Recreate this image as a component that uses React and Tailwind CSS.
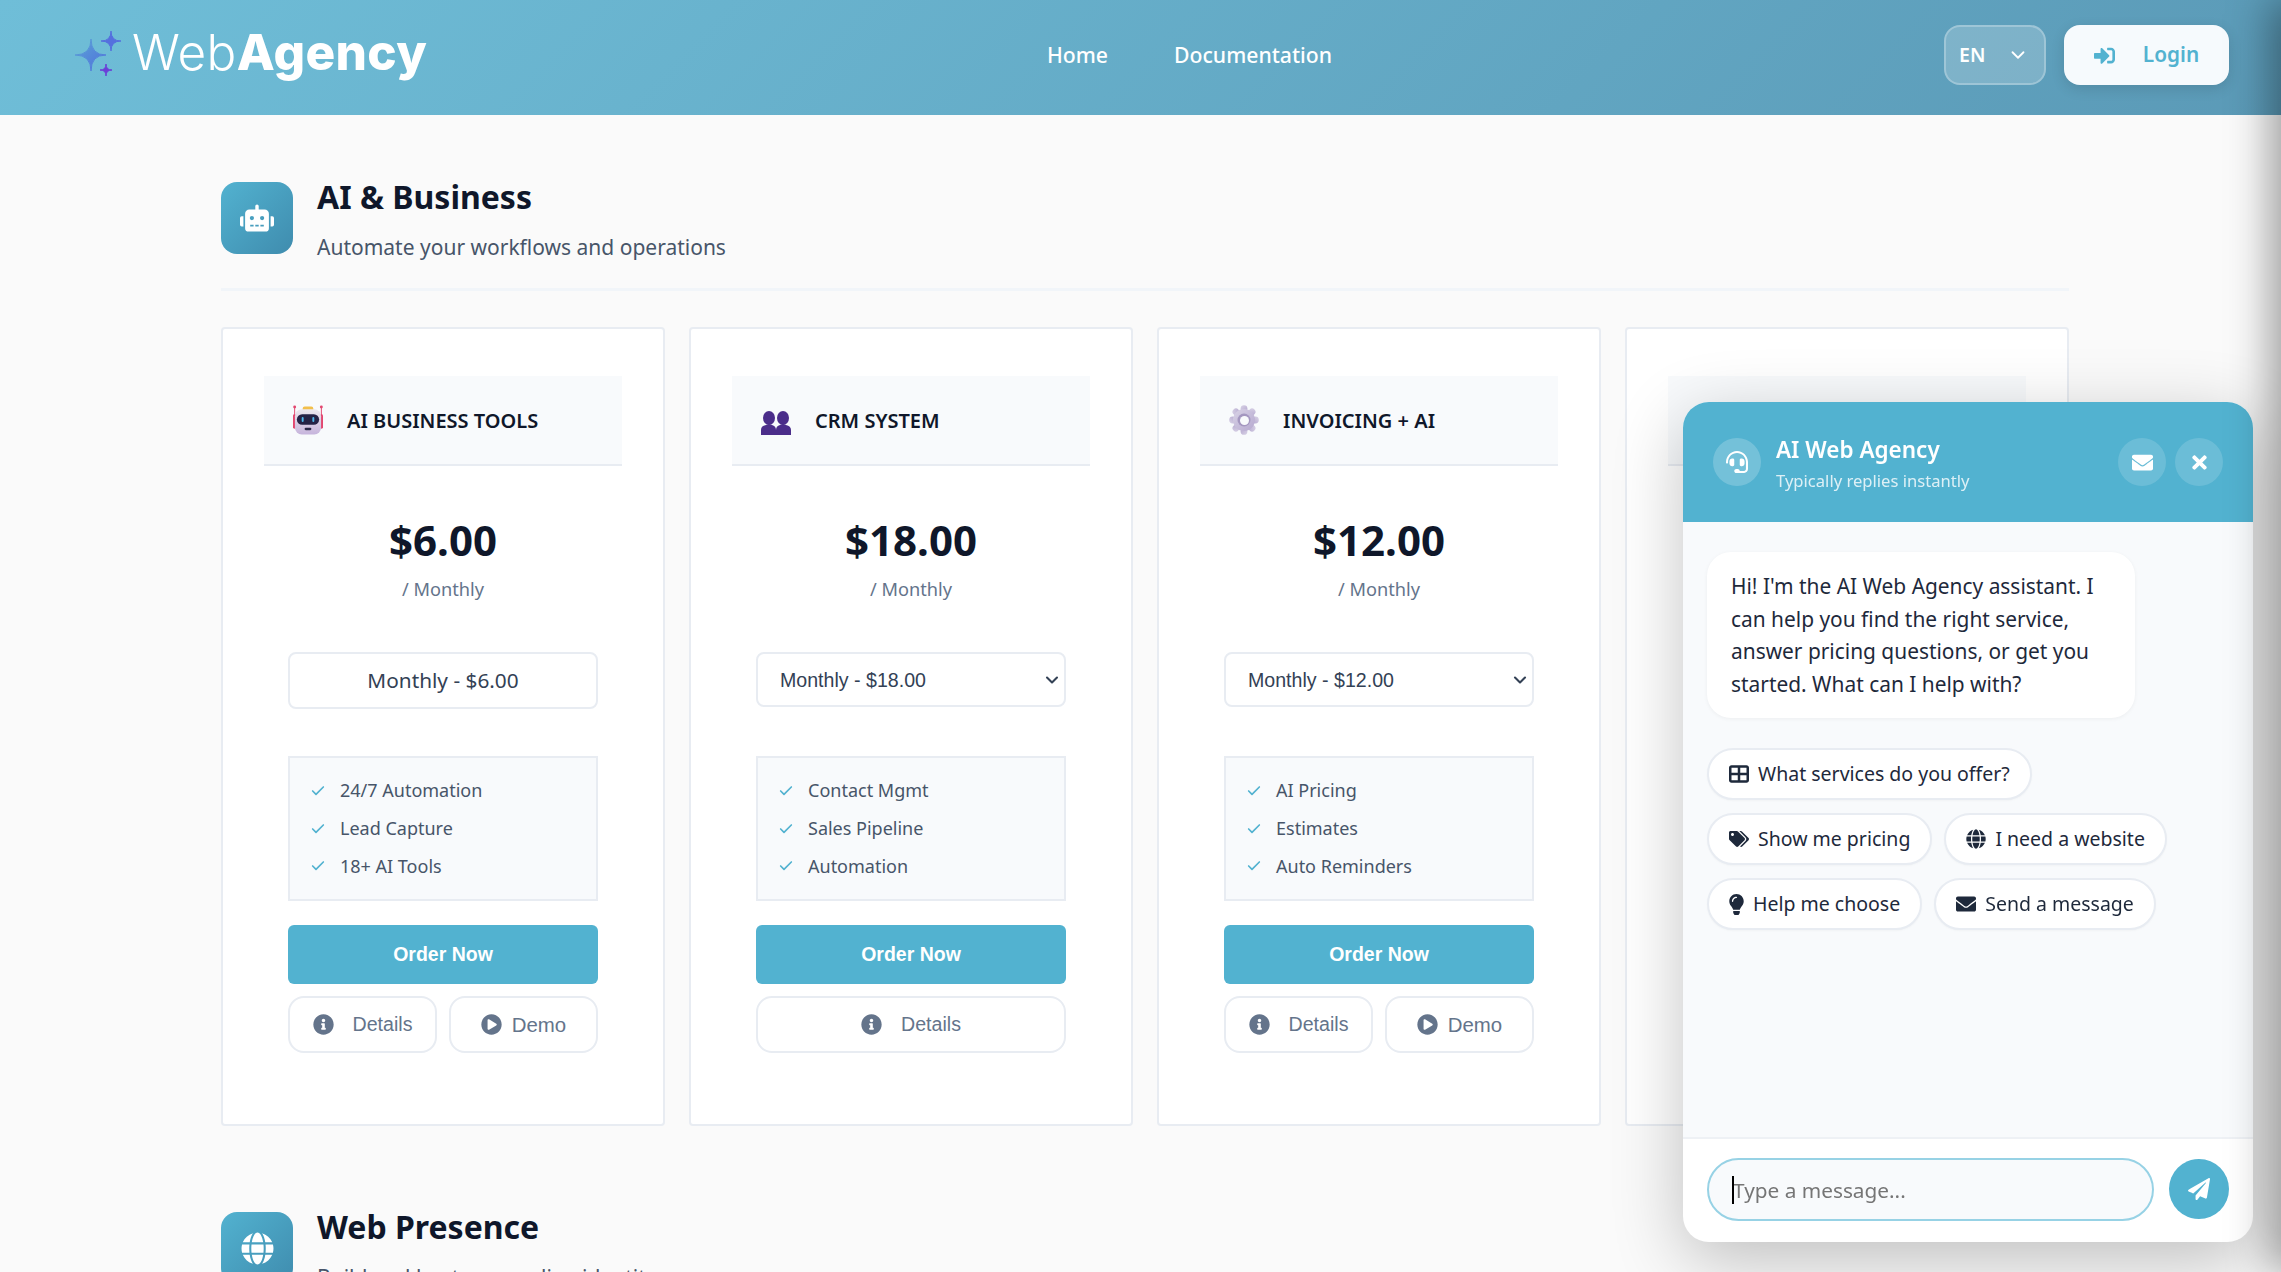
import { Check, ChevronDown } from "lucide-react";
import {
  FaRobot, FaGlobe, FaHeadset, FaEnvelope, FaTimes, FaPaperPlane, FaTags,
  FaLightbulb, FaInfoCircle, FaPlayCircle, FaSignInAlt,
} from "react-icons/fa";
import { FaTableCellsLarge } from "react-icons/fa6";

function Stars() {
  return (
    <svg width="46" height="46" viewBox="0 0 46 46" className="shrink-0 mt-[-3px]">
      <defs>
        <linearGradient id="star" x1="0" y1="0" x2="1" y2="1">
          <stop offset="0" stopColor="#5ba4d6" />
          <stop offset="1" stopColor="#4f6fdc" />
        </linearGradient>
      </defs>
      <path d="M16 8Q16 24 31 24Q16 24 16 40Q16 24 0 24Q16 24 16 8Z" fill="url(#star)" stroke="url(#star)" strokeWidth="1" />
      <path d="M36 0Q36 10 46 10Q36 10 36 20Q36 10 26 10Q36 10 36 0Z" fill="#5570de" stroke="#5570de" strokeWidth="1" />
      <path d="M31 33Q31 39 37 39Q31 39 31 45Q31 39 25 39Q31 39 31 33Z" fill="#6a3fd8" stroke="#6a3fd8" strokeWidth="1" />
    </svg>
  );
}

function RobotEmoji() {
  return (
    <svg width="31" height="30" viewBox="0 0 31 30">
      <defs>
        <linearGradient id="head" x1="0" y1="0" x2="0" y2="1">
          <stop offset="0" stopColor="#ece8ee" />
          <stop offset="1" stopColor="#c6b4dc" />
        </linearGradient>
      </defs>
      <rect x="0" y="9" width="3" height="15" rx="1.5" fill="#e2476f" />
      <rect x="28" y="9" width="3" height="15" rx="1.5" fill="#e2476f" />
      <rect x="1.2" y="1" width="1" height="9" fill="#e2476f" />
      <rect x="28.8" y="1" width="1" height="9" fill="#e2476f" />
      <circle cx="1.7" cy="1.5" r="1.5" fill="#e2476f" />
      <circle cx="29.3" cy="1.5" r="1.5" fill="#e2476f" />
      <rect x="10" y="1" width="11" height="5" rx="2" fill="#f2bf4b" />
      <rect x="2" y="4" width="27" height="26" rx="7" fill="url(#head)" />
      <rect x="4" y="9" width="23" height="11" rx="5.5" fill="#252245" />
      <rect x="9" y="12" width="2" height="5" rx="1" fill="#4fb7ea" />
      <rect x="20" y="12" width="2" height="5" rx="1" fill="#4fb7ea" />
      <rect x="12" y="23" width="7" height="2.5" rx="1.2" fill="#2d2a4a" />
    </svg>
  );
}

function PeopleEmoji() {
  return (
    <svg width="30" height="24" viewBox="0 0 30 24" className="mt-[6px]">
      <g fill="#4b2d8a">
        <ellipse cx="8" cy="7" rx="6" ry="7" />
        <ellipse cx="22" cy="7" rx="6" ry="7" />
        <path d="M0 24v-5q0-4 5-5l3-1 3 1q4 1 4 5v5z" />
        <path d="M15 24v-5q0-4 4-5l3-1 3 1q5 1 5 5v5z" />
      </g>
    </svg>
  );
}

function GearEmoji() {
  const angles = [0, 45, 90, 135, 180, 225, 270, 315];
  return (
    <svg width="30" height="30" viewBox="0 0 30 30">
      <defs>
        <linearGradient id="gear" x1="0" y1="0" x2="1" y2="1">
          <stop offset="0" stopColor="#d9d3e6" />
          <stop offset="1" stopColor="#b5a8cf" />
        </linearGradient>
      </defs>
      <g fill="url(#gear)">
        {angles.map((a) => (
          <circle key={a} cx="15" cy="3.6" r="3.4" transform={`rotate(${a} 15 15)`} />
        ))}
        <circle cx="15" cy="15" r="11" />
      </g>
      <circle cx="15" cy="15" r="6.5" fill="#a497c0" />
      <circle cx="15.5" cy="15.5" r="4.5" fill="#f8fafc" />
    </svg>
  );
}

function SectionHead({ icon, title, sub }) {
  return (
    <div className="flex gap-6 h-[109px] border-b-[3px] border-[#f1f5f9]">
      <div className="w-[72px] h-[72px] rounded-2xl bg-[linear-gradient(135deg,#52b2d0,#3f8cae)] flex items-center justify-center text-white shrink-0">
        {icon}
      </div>
      <div>
        <h2 className="text-[32px] leading-[36px] mt-[-3px] font-bold text-[#0f172a]">{title}</h2>
        <p className="text-[21px] leading-[28px] mt-[18px] text-[#475569]">{sub}</p>
      </div>
    </div>
  );
}

function PlanCard({ icon, name, price, option, features, demo, plain }) {
  return (
    <div className="h-[799px] bg-white border-2 border-[#e8ecf2] rounded-[4px] pt-[47px] px-[41px]">
      <div className="h-[90px] bg-[#f8fafc] border-b-2 border-[#e8ecf2] flex items-center pl-[29px] gap-[24px]">
        <div className="w-[30px] flex justify-center shrink-0">{icon}</div>
        <h3 className="text-[20px] mt-[1px] font-semibold text-[#0f172a] uppercase">{name}</h3>
      </div>
      <div className="px-6">
        <div className="mt-[44px] text-[42px] leading-[60px] font-bold text-[#0f172a] text-center">{price}</div>
        <div className="mt-[6px] text-[18.2px] leading-[26px] text-[#64748b] text-center">/ Monthly</div>
        {plain ? (
          <div className="mt-[50px] h-[57px] border-2 border-[#e8ecf2] rounded-lg flex items-center justify-center text-[20.8px] text-[#334155]">
            {option}
          </div>
        ) : (
          <div className="relative mt-[50px] h-[57px]">
            <select className="appearance-none w-full h-[55px] block bg-white border-2 border-[#e8ecf2] rounded-lg pl-[22px] pt-[2px] text-[19.6px] text-[#334155] font-['Liberation_Sans',sans-serif]">
              <option>{option}</option>
            </select>
            <ChevronDown size={20} strokeWidth={2.5} className="absolute right-[4px] top-[18px] text-[#334155]" />
          </div>
        )}
        <div className="mt-[47px] h-[145px] bg-[#f8fafc] border-2 border-[#e8ecf2] pt-[14px] pl-[20px]">
          {features.map((f) => (
            <div key={f} className="flex items-center gap-[14px] h-[37.7px] text-[18px] text-[#475569]">
              <Check size={16} strokeWidth={2.5} className="text-[#52b2d0] shrink-0" />
              <span>{f}</span>
            </div>
          ))}
        </div>
        <button className="mt-6 w-full h-[59px] rounded-md bg-[#52b2d0] text-white text-[19.5px] font-bold font-['Liberation_Sans',sans-serif]">
          Order Now
        </button>
        <div className="mt-3 flex gap-3 text-[#64748b]">
          <button className="flex-1 h-[57px] border-2 border-[#e8ecf2] rounded-2xl bg-white flex items-center justify-center gap-[19px] text-[19.6px] font-['Liberation_Sans',sans-serif]">
            <FaInfoCircle size={21} />
            <span>Details</span>
          </button>
          {demo && (
            <button className="flex-1 h-[57px] border-2 border-[#e8ecf2] rounded-2xl bg-white flex items-center justify-center gap-[10px] text-[20.4px] font-['Liberation_Sans',sans-serif]">
              <FaPlayCircle size={21} />
              <span className="mt-[2px]">Demo</span>
            </button>
          )}
        </div>
      </div>
    </div>
  );
}

function Chip({ icon, children }) {
  return (
    <button className="h-[52px] px-[20px] rounded-full bg-white border-2 border-[#e8ecf2] flex items-center gap-[9px] text-[19.5px] text-[#1e293b] shadow-[0_1px_2px_rgba(0,0,0,0.03)]">
      {icon}
      {children}
    </button>
  );
}

function ChatWidget() {
  return (
    <div className="fixed right-[28px] bottom-[30px] w-[570px] h-[840px] rounded-[26px] bg-white overflow-hidden flex flex-col shadow-[0_18px_70px_rgba(0,0,0,0.24)] z-10">
      <div className="h-[120px] bg-[#52b2d0] flex items-center pl-[30px] pr-[30px] shrink-0">
        <div className="w-12 h-12 rounded-full bg-white/20 flex items-center justify-center text-white">
          <FaHeadset size={22} />
        </div>
        <div className="ml-[15px] mt-[4px]">
          <div className="text-[22.5px] leading-[30px] font-semibold text-white">AI Web Agency</div>
          <div className="text-[16.6px] leading-[24px] mt-[4.5px] text-white/80">Typically replies instantly</div>
        </div>
        <div className="ml-auto flex gap-[9px]">
          <div className="w-12 h-12 rounded-full bg-white/15 flex items-center justify-center text-white">
            <FaEnvelope size={21} />
          </div>
          <div className="w-12 h-12 rounded-full bg-white/15 flex items-center justify-center text-white">
            <FaTimes size={21} />
          </div>
        </div>
      </div>
      <div className="flex-1 bg-[#f8fafc] px-6 pt-[30px] border-b-2 border-[#eef1f5]">
        <div className="w-[428px] h-[166px] bg-white rounded-[24px] py-[18px] px-6 text-[20.9px] leading-[32.7px] text-[#1e293b] shadow-[0_1px_4px_rgba(0,0,0,0.05)]">
          Hi! I'm the AI Web Agency assistant. I can help you find the right service, answer pricing questions, or get you started. What can I help with?
        </div>
        <div className="mt-[30px] flex flex-col items-start gap-[13px]">
          <Chip icon={<FaTableCellsLarge size={20} />}>What services do you offer?</Chip>
          <div className="flex gap-[12px]">
            <Chip icon={<FaTags size={20} />}>Show me pricing</Chip>
            <Chip icon={<FaGlobe size={20} />}>I need a website</Chip>
          </div>
          <div className="flex gap-[12px]">
            <Chip icon={<FaLightbulb className="w-[15px] h-[21px]" />}>Help me choose</Chip>
            <Chip icon={<FaEnvelope size={20} />}>Send a message</Chip>
          </div>
        </div>
      </div>
      <div className="h-[103px] flex items-start pl-6 pr-6 pt-[19px] gap-[15px] shrink-0">
        <div className="relative w-[447px]">
          <input
            placeholder="Type a message..."
            className="w-full h-[63px] rounded-full border-2 border-[#97d2e5] bg-[#f8fafc] pl-[24px] text-[20.8px] outline-none placeholder:text-[#757575]"
          />
          <span className="absolute left-[25px] top-[18px] w-[2px] h-[28px] bg-black" />
        </div>
        <button className="w-[60px] h-[60px] mt-[1px] rounded-full bg-[#52b2d0] flex items-center justify-center text-white shrink-0">
          <FaPaperPlane size={22} />
        </button>
      </div>
    </div>
  );
}

export default function App() {
  return (
    <div className="h-screen overflow-hidden bg-[#fafafa] font-['Noto_Sans',sans-serif]">
      <header className="h-[115px] bg-[linear-gradient(135deg,#6fbed8,#5b9ab7)] flex items-center pl-[75px] pr-[52px] pb-[5px]">
        <div className="flex items-center gap-[11px] w-[972px] shrink-0">
          <Stars />
          <div className="text-[49.5px] leading-none text-white font-['Inter',sans-serif] font-light tracking-[0.3px] mt-[-5px]">
            Web<span className="font-extrabold">Agency</span>
          </div>
        </div>
        <nav className="flex gap-[66px] text-[21.2px] font-medium text-white">
          <a>Home</a>
          <a>Documentation</a>
        </nav>
        <div className="ml-auto flex items-center gap-[18px]">
          <div className="w-[102px] h-[60px] rounded-2xl bg-white/20 border-2 border-white/25 flex items-center justify-between pl-[13px] pr-[15px] text-white text-[19.5px] font-semibold">
            EN
            <ChevronDown size={22} />
          </div>
          <button className="w-[165px] h-[60px] rounded-2xl bg-[#f6fafd] text-[#52b2d0] flex items-center justify-center gap-[28px] text-[20.8px] font-semibold shadow-[0_4px_14px_rgba(0,0,0,0.12)]">
            <FaSignInAlt size={21} />
            Login
          </button>
        </div>
      </header>

      <main className="pl-[221px] w-[2069px] pt-[67px]">
        <SectionHead icon={<FaRobot size={34} />} title="AI & Business" sub="Automate your workflows and operations" />
        <div className="mt-[36px] grid grid-cols-4 gap-6">
          <PlanCard
            icon={<RobotEmoji />}
            name="AI Business Tools"
            price="$6.00"
            option="Monthly - $6.00"
            features={["24/7 Automation", "Lead Capture", "18+ AI Tools"]}
            demo
            plain
          />
          <PlanCard
            icon={<PeopleEmoji />}
            name="CRM System"
            price="$18.00"
            option="Monthly - $18.00"
            features={["Contact Mgmt", "Sales Pipeline", "Automation"]}
          />
          <PlanCard
            icon={<GearEmoji />}
            name="Invoicing + AI"
            price="$12.00"
            option="Monthly - $12.00"
            features={["AI Pricing", "Estimates", "Auto Reminders"]}
            demo
          />
          <div className="h-[799px] bg-white border-2 border-[#e8ecf2] rounded-[4px] pt-[47px] px-[41px]">
            <div className="h-[90px] bg-[#f8fafc] border-b-2 border-[#e8ecf2]" />
          </div>
        </div>
        <div className="mt-[86px]">
          <SectionHead icon={<FaGlobe size={33} />} title="Web Presence" sub="Build and host your online identity" />
        </div>
      </main>

      <ChatWidget />
      {/* closed side drawer sitting just off the right edge, only its shadow shows */}
      <div className="fixed top-0 left-full w-[300px] h-full shadow-[-10px_0_40px_rgba(0,0,0,0.38)] z-20" />
    </div>
  );
}
